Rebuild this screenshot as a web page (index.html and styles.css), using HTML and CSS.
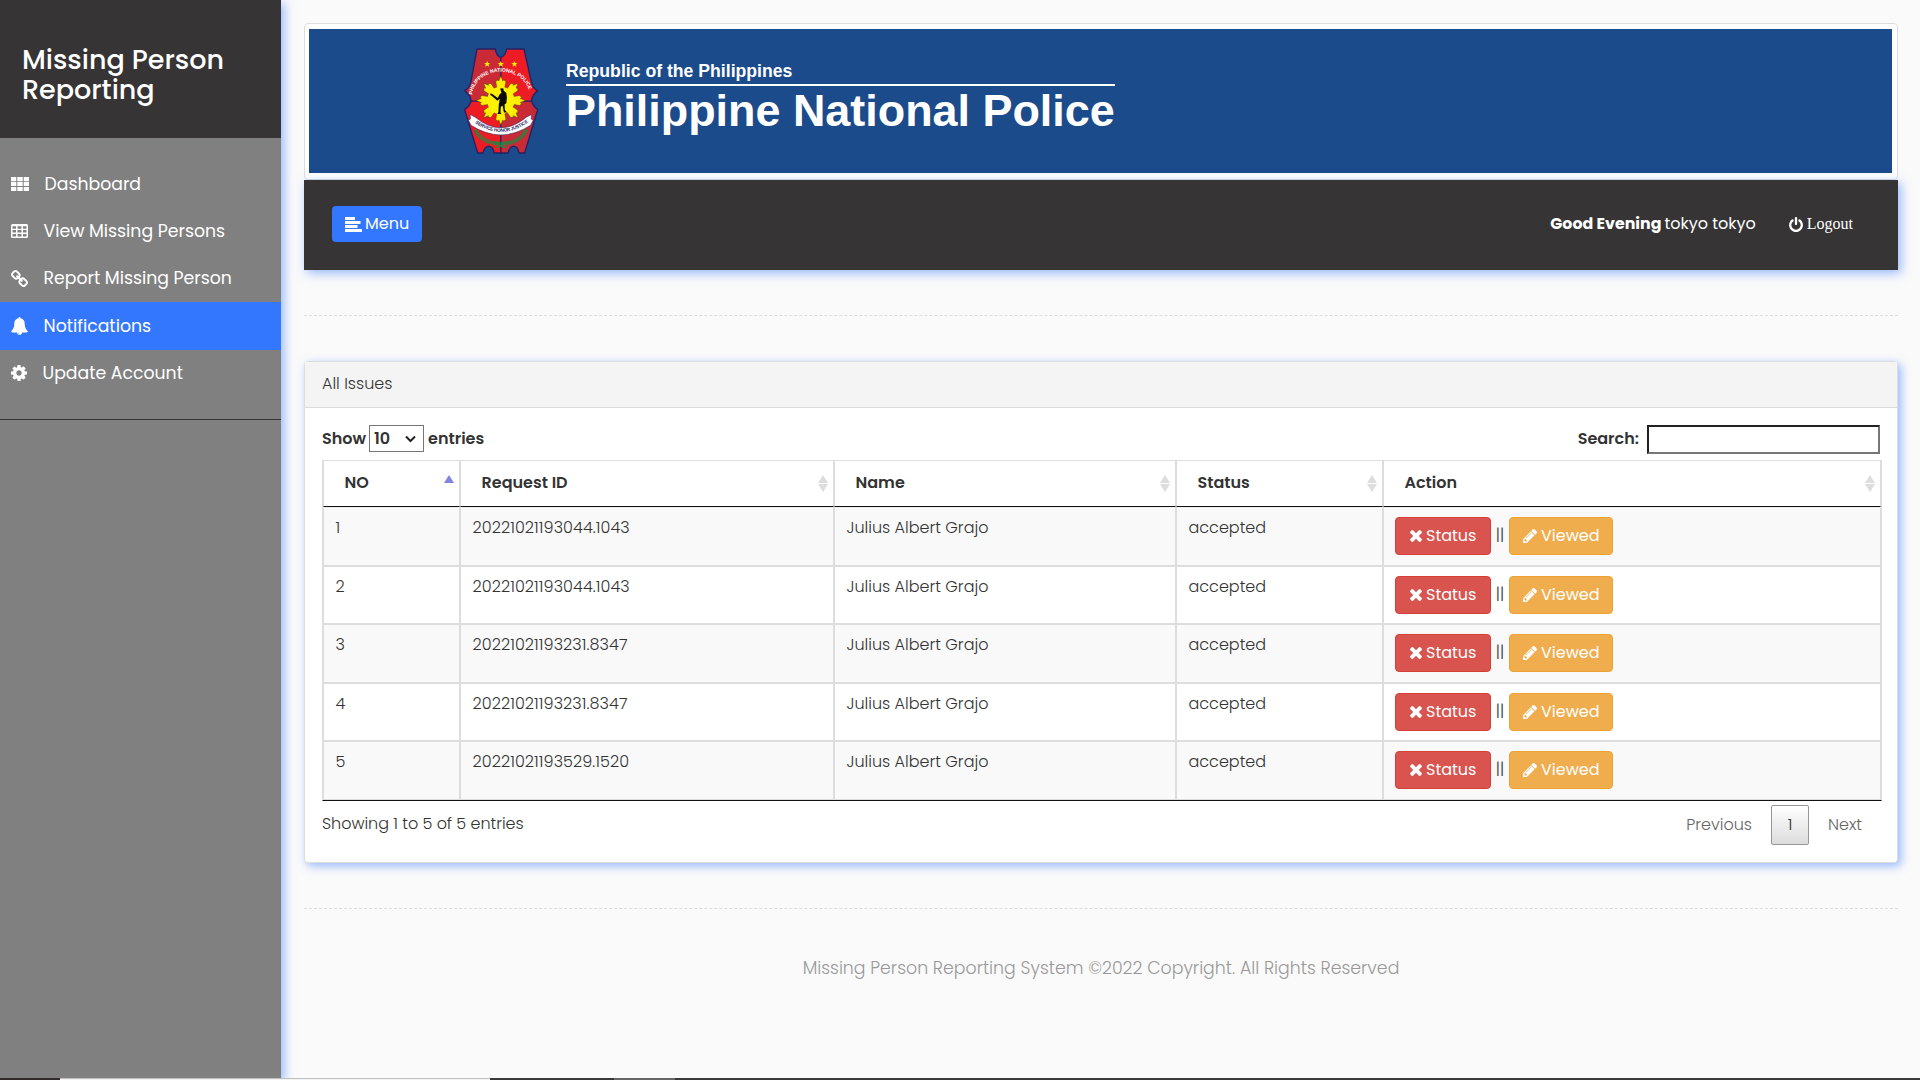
FILE: index.html
```html
<!DOCTYPE html>
<html lang="en">
<head>
<meta charset="utf-8">
<title>Missing Person Reporting</title>
<link rel="stylesheet" href="styles.css">
</head>
<body>
<svg class="sprite" width="0" height="0" aria-hidden="true">
  <symbol id="bell" viewBox="64 0 1664 1792"><path d="M912 1696q0-16-16-16-59 0-101.5-42.5t-42.5-101.5q0-16-16-16t-16 16q0 73 51.5 124.5t124.5 51.5q16 0 16-16zm816-288q0 52-38 90t-90 38h-448q0 106-75 181t-181 75-181-75-75-181h-448q-52 0-90-38t-38-90q50-42 91-88t85-119.5 74.5-158.5 50-206 19.5-260q0-152 117-282.5t307-158.5q-8-19-8-39 0-40 28-68t68-28 68 28 28 68q0 20-8 39 190 28 307 158.5t117 282.5q0 139 19.5 260t50 206 74.5 158.5 85 119.5 91 88z"/></symbol>
  <symbol id="cog" viewBox="128 128 1536 1536"><path d="M1152 896q0-106-75-181t-181-75-181 75-75 181 75 181 181 75 181-75 75-181zm512-109v222q0 12-8 23t-20 13l-185 28q-19 54-39 91 35 50 107 138 10 12 10 25t-9 23q-27 37-99 108t-94 71q-12 0-26-9l-138-108q-44 23-91 38-16 136-29 186-7 28-36 28h-222q-14 0-24.5-8.5t-11.5-21.5l-28-184q-49-16-90-37l-141 107q-10 9-25 9-14 0-25-11-126-114-165-168-7-10-7-23 0-12 8-23 15-21 51-66.5t54-70.5q-27-50-41-99l-183-27q-13-2-21-12.5t-8-23.5v-222q0-12 8-23t19-13l186-28q14-46 39-92-40-57-107-138-10-12-10-24 0-10 9-23 26-36 98.5-107.5t94.5-71.5q13 0 26 10l138 107q44-23 91-38 16-136 29-186 7-28 36-28h222q14 0 24.5 8.5t11.5 21.5l28 184q49 16 90 37l142-107q9-9 24-9 13 0 25 10 129 119 165 170 7 8 7 22 0 12-8 23-15 21-51 66.5t-54 70.5q26 50 41 98l183 28q13 2 21 12.5t8 23.5z"/></symbol>
  <symbol id="power" viewBox="128 0 1536 1664"><path d="M1664 896q0 156-61 298t-164 245-245 164-298 61-298-61-245-164-164-245-61-298q0-182 80.5-343t226.5-270q43-32 95.5-25t83.5 50q32 42 24.5 94.5t-49.5 84.5q-98 74-151.5 181t-53.5 228q0 104 40.5 198.5t109.5 163.5 163.5 109.5 198.5 40.5 198.5-40.5 163.5-109.5 109.5-163.5 40.5-198.5q0-121-53.5-228t-151.5-181q-42-32-49.5-84.5t24.5-94.5q31-43 84-50t95 25q146 109 226.5 270t80.5 343zm-640-768v640q0 52-38 90t-90 38-90-38-38-90v-640q0-52 38-90t90-38 90 38 38 90z"/></symbol>
  <symbol id="times" viewBox="302 366 1188 1188"><path d="M1490 1322q0 40-28 68l-136 136q-28 28-68 28t-68-28l-294-294-294 294q-28 28-68 28t-68-28l-136-136q-28-28-28-68t28-68l294-294-294-294q-28-28-28-68t28-68l136-136q28-28 68-28t68 28l294 294 294-294q28-28 68-28t68 28l136 136q28 28 28 68t-28 68l-294 294 294 294q28 28 28 68z"/></symbol>
  <symbol id="pencil" viewBox="128 149 1515 1515"><path d="M491 1536l91-91-235-235-91 91v107h128v128h107zm523-928q0-22-22-22-10 0-17 7l-542 542q-7 7-7 17 0 22 22 22 10 0 17-7l542-542q7-7 7-17zm-54-192l416 416-832 832h-416v-416zm683 96q0 53-37 90l-166 166-416-416 166-165q36-38 90-38 53 0 91 38l235 234q37 39 37 91z"/></symbol>
  <symbol id="chain" viewBox="80 16 1632 1632"><path d="M1520 1216q0-40-28-68l-208-208q-28-28-68-28-42 0-72 32 3 3 19 18.5t21.5 21.5 15 19 13 25.5 3.5 27.5q0 40-28 68t-68 28q-15 0-27.5-3.5t-25.5-13-19-15-21.5-21.5-18.5-19q-33 31-33 73 0 40 28 68l206 207q27 27 68 27 40 0 68-26l147-146q28-28 28-67zm-703-705q0-40-28-68l-206-207q-28-28-68-28-39 0-68 27l-147 146q-28 28-28 67 0 40 28 68l208 208q27 27 68 27 42 0 72-31-3-3-19-18.5t-21.5-21.5-15-19-13-25.5-3.5-27.5q0-40 28-68t68-28q15 0 27.5 3.5t25.5 13 19 15 21.5 21.5 18.5 19q33-31 33-73zm895 705q0 120-85 203l-147 146q-83 83-203 83-121 0-204-85l-206-207q-83-83-83-203 0-123 88-209l-88-88q-86 88-208 88-120 0-204-84l-208-208q-84-84-84-204t85-203l147-146q83-83 203-83 121 0 204 85l206 207q83 83 83 203 0 123-88 209l88 88q86-88 208-88 120 0 204 84l208 208q84 84 84 204z"/></symbol>
  <symbol id="th" viewBox="0 0 18 14"><path d="M0 0h5.300v4.200H0zM6.300 0h5.400v4.200H6.300zM12.700 0H18v4.200h-5.300zM0 5h5.300v4.100H0zM6.300 5h5.400v4.100H6.300zM12.700 5H18v4.100h-5.300zM0 9.900h5.300V14H0zM6.300 9.900h5.400V14H6.300zM12.700 9.900H18V14h-5.300z"/></symbol>
  <symbol id="grid" viewBox="0 0 17 14"><path fill-rule="evenodd" d="M1.500 0h14A1.500 1.500 0 0 1 17 1.500v11a1.500 1.500 0 0 1-1.500 1.500h-14A1.500 1.500 0 0 1 0 12.500v-11A1.500 1.500 0 0 1 1.500 0zM1.500 2.200v2.500h3.500V2.200zM6.500 2.200v2.500h4V2.200zM12 2.200v2.500h3.500V2.200zM1.500 6v2.600h3.500V6zM6.500 6v2.600h4V6zM12 6v2.600h3.500V6zM1.500 10v2.500h3.500V10zM6.500 10v2.500h4V10zM12 10v2.500h3.500V10z"/></symbol>
  <symbol id="align" viewBox="0 0 17 15"><path d="M0 0h10v3H0zM0 4h15.500v3H0zM0 8h12.500v3H0zM0 12h17v3H0z"/></symbol>
  <symbol id="sort" viewBox="0 0 10 17"><path d="M5 0l5 8H0zM5 17l5-8H0z"/></symbol>
  <symbol id="sort-asc" viewBox="0 0 10 17"><path d="M5 0l5 8H0z"/></symbol>
</svg>
<div class="app">
  <nav class="sidebar">
    <h3 class="brand">Missing Person<br>Reporting</h3>
    <ul class="menu">
      <li><svg width="18" height="14"><use href="#th"/></svg><span>Dashboard</span></li>
      <li><svg width="17" height="14"><use href="#grid"/></svg><span>View Missing Persons</span></li>
      <li><svg width="17" height="17"><use href="#chain"/></svg><span>Report Missing Person</span></li>
      <li class="active"><svg width="17" height="18"><use href="#bell"/></svg><span>Notifications</span></li>
      <li class="account"><svg width="16" height="16"><use href="#cog"/></svg><span>Update Account</span></li>
    </ul>
  </nav>
  <main class="content">
    <header class="banner">
      <div class="banner-inner">
        <svg class="emblem" width="75" height="106" viewBox="75 57 220 311">
          <defs>
            <clipPath id="shield"><path d="M113 60h54q2 20 16 25 14-5 17-25h51l22 98q2 16 18 24-15 12-18 29 3 16 18 27L253 365h-17q-2-18-15-20-14 2-16 20h-42q-2-18-15-20-14 2-17 20h-16L77 238q15-10 19-27-3-17-19-29 14-8 18-24z"/></clipPath>
            <path id="arc-top" d="M99 194C112 104 255 104 269 194"/>
            <path id="arc-low" d="M103 274Q183 332 265 274"/>
          </defs>
          <g clip-path="url(#shield)">
            <path fill="#c92a35" d="M75 57h108v155H75zM183 212h112v156H183z"/>
            <path fill="#ed1c24" d="M183 57h112v155H183zM75 212h108v156H75z"/>
            <path stroke="#262262" stroke-width="4" d="M183 57v311M75 213h220"/>
          </g>
          <path fill="none" stroke="#262262" stroke-width="4" stroke-linejoin="round" d="M113 60h54q2 20 16 25 14-5 17-25h51l22 98q2 16 18 24-15 12-18 29 3 16 18 27L253 365h-17q-2-18-15-20-14 2-16 20h-42q-2-18-15-20-14 2-17 20h-16L77 238q15-10 19-27-3-17-19-29 14-8 18-24z"/>
          <g fill="#ffed00"><path id="star" d="M143 95l2.500 6 6.500.5-5 4 2 6.500-6-3.500-6 3.500 2-6.500-5-4 6.500-.5z"/><use href="#star" x="40"/><use href="#star" x="80"/></g>
          <g fill="#ffed00" stroke="#51420b" stroke-width="1.500">
            <g id="rays"><path d="M173 182l-5-27 7-5 2 4 6-15 6 15 2-4 7 5-5 27zM193 240l5 27-7 5-2-4-6 15-6-15-2 4-7-5 5-27z"/></g>
            <use href="#rays" transform="rotate(45 183 211)"/><use href="#rays" transform="rotate(90 183 211)"/><use href="#rays" transform="rotate(135 183 211)"/>
          </g>
          <circle cx="183" cy="211" r="40" fill="#fff200"/>
          <path fill="#0b0b08" d="M181 176l9-1 2 8 7 5 2 14-2 17-5 4 1 15 6 8h-9l-4-20-5 4-1 16 3 5h-12l3-7 1-21 3-17-7 6-17-15-4-2 1-5 6 3 15 11 6-12 5-3z"/>
          <g fill="none" stroke="#188b45"><path stroke-width="11" stroke-dasharray="5 2" d="M108 297q20 40 75 41 55-1 75-41"/><path stroke-width="3" d="M168 350q15-3 30-20M198 350q-15-3-30-20"/></g>
          <path fill="#fff" stroke="#262262" stroke-width="1.500" d="M93 252l15 8q75 62 150 0l15-8-1 13 6 4-8 15q-87 56-174 0l-8-15 6-4z"/>
          <text class="motto"><textPath href="#arc-low" startOffset="3%" textLength="168">SERVICE HONOR JUSTICE</textPath></text>
          <text class="arc-name"><textPath href="#arc-top" textLength="222">PHILIPPINE NATIONAL POLICE</textPath></text>
        </svg>
        <div class="agency"><div class="republic">Republic of the Philippines</div><div class="pnp">Philippine National Police</div></div>
      </div>
    </header>
    <div class="topbar">
      <button class="menu-btn"><svg width="17" height="15"><use href="#align"/></svg><span>Menu</span></button>
      <div class="user"><b>Good Evening</b><span class="who">tokyo tokyo</span><svg width="14" height="15"><use href="#power"/></svg><span class="logout">Logout</span></div>
    </div>
    <div class="rule"></div>
    <section class="card">
      <div class="card-head">All Issues</div>
      <div class="card-body">
        <div class="controls">
          <div class="length"><span>Show</span><div class="select"><span>10</span><svg width="11" height="8" viewBox="0 0 11 8"><path d="M1 1.500l4.500 4.500L10 1.500" fill="none" stroke="#222" stroke-width="2"/></svg></div><span>entries</span></div>
          <label class="search"><span>Search:</span><input type="text"></label>
        </div>
        <table>
          <colgroup><col class="c1"><col class="c2"><col class="c3"><col class="c4"><col class="c5"></colgroup>
          <thead><tr>
            <th><div><span>NO</span><svg class="asc" width="10" height="17"><use href="#sort-asc"/></svg></div></th>
            <th><div><span>Request ID</span><svg width="10" height="17"><use href="#sort"/></svg></div></th>
            <th><div><span>Name</span><svg width="10" height="17"><use href="#sort"/></svg></div></th>
            <th><div><span>Status</span><svg width="10" height="17"><use href="#sort"/></svg></div></th>
            <th><div><span>Action</span><svg width="10" height="17"><use href="#sort"/></svg></div></th>
          </tr></thead>
          <tbody>
            <tr><td>1</td><td class="id">20221021193044.1043</td><td>Julius Albert Grajo</td><td>accepted</td><td><div class="actions"><button class="btn red"><svg width="12" height="12"><use href="#times"/></svg><span>Status</span></button><span class="sep">||</span><button class="btn amber"><svg width="14" height="14"><use href="#pencil"/></svg><span>Viewed</span></button></div></td></tr>
            <tr><td>2</td><td class="id">20221021193044.1043</td><td>Julius Albert Grajo</td><td>accepted</td><td><div class="actions"><button class="btn red"><svg width="12" height="12"><use href="#times"/></svg><span>Status</span></button><span class="sep">||</span><button class="btn amber"><svg width="14" height="14"><use href="#pencil"/></svg><span>Viewed</span></button></div></td></tr>
            <tr><td>3</td><td class="id">20221021193231.8347</td><td>Julius Albert Grajo</td><td>accepted</td><td><div class="actions"><button class="btn red"><svg width="12" height="12"><use href="#times"/></svg><span>Status</span></button><span class="sep">||</span><button class="btn amber"><svg width="14" height="14"><use href="#pencil"/></svg><span>Viewed</span></button></div></td></tr>
            <tr><td>4</td><td class="id">20221021193231.8347</td><td>Julius Albert Grajo</td><td>accepted</td><td><div class="actions"><button class="btn red"><svg width="12" height="12"><use href="#times"/></svg><span>Status</span></button><span class="sep">||</span><button class="btn amber"><svg width="14" height="14"><use href="#pencil"/></svg><span>Viewed</span></button></div></td></tr>
            <tr><td>5</td><td class="id">20221021193529.1520</td><td>Julius Albert Grajo</td><td>accepted</td><td><div class="actions"><button class="btn red"><svg width="12" height="12"><use href="#times"/></svg><span>Status</span></button><span class="sep">||</span><button class="btn amber"><svg width="14" height="14"><use href="#pencil"/></svg><span>Viewed</span></button></div></td></tr>
          </tbody>
        </table>
        <div class="foot"><span class="info">Showing 1 to 5 of 5 entries</span><div class="pager"><span>Previous</span><span class="current">1</span><span>Next</span></div></div>
      </div>
    </section>
    <div class="rule"></div>
    <footer>Missing Person Reporting System ©2022 Copyright. All Rights Reserved</footer>
  </main>
</div>
<div class="taskbar"><div class="seg-start"></div><div class="seg-search"></div><div class="seg-gap"></div><div class="seg-app"></div><div class="seg-rest"></div></div>
</body>
</html>
```
FILE: styles.css
```css
*{box-sizing:border-box}
body{margin:0;background:#fafafa;color:#333;font:300 16px/20px Poppins,Inter,"Open Sans",sans-serif;overflow:hidden}
svg{display:block;flex:none;fill:currentColor}
.sprite{position:absolute}
.app{display:flex;height:1080px}
.sidebar{width:281px;flex:none;background:#808080;color:#fff;box-shadow:3px 3px 10px rgba(51,119,255,.5)}
.brand{margin:0;height:138px;padding:45px 0 0 22px;background:#363434;font-size:27px;line-height:30px;font-weight:500}
.menu{list-style:none;margin:0;padding:22px 0 23px;border-bottom:1px solid #363434;font-size:17.300px;font-weight:400}
.menu li{display:flex;align-items:center;gap:15.500px;height:47.400px;padding-left:11px}
.menu .active{height:48px;background:#37f}
.menu .account{height:46px}
.content{flex:1;padding:23px 22px 0 23px}
.banner{height:157px;padding:5px 5px 5px 4px;border:1px solid #ddd;border-radius:4px;background:#fff}
.banner-inner{display:flex;height:144px;padding:19px 0 0 155px;background:#1b4b8b;font-family:"Liberation Sans",Arial,sans-serif;font-weight:700;color:#fff}
.agency{margin-left:27px;padding-top:13px}
.republic{font-size:17.650px;height:25px;border-bottom:2px solid #fff}
.pnp{font-size:44.900px;line-height:50px}
.motto,.arc-name{font-family:"Liberation Sans",Arial,sans-serif}
.motto{font-size:14px;font-weight:700;fill:#262262}
.arc-name{font-size:15px;fill:#fff}
.topbar{display:flex;justify-content:space-between;align-items:center;height:90px;padding:0 45px 2px 28px;background:#363434;color:#fff;box-shadow:3px 3px 10px rgba(51,119,255,.5)}
.menu-btn{display:flex;align-items:center;gap:3px;width:90px;height:36px;padding:0 13px;border:0;border-radius:4px;background:#37f;color:#fff;font:400 16px/20px Poppins,Inter,sans-serif}
.user{display:flex;align-items:center;font-weight:400}
.user b{margin-right:3px;font-size:15.800px}
.who{margin-right:33px}
.logout{margin-left:4px;font:16px/20px "Liberation Serif",serif}
.rule{margin:45px 0;border-top:1px dashed #ddd}
.card{height:502px;border:1px solid #ddd;border-radius:4px;background:#fff;box-shadow:3px 3px 10px rgba(51,119,255,.5)}
.card-head{height:46px;padding:12px 17px;background:#f4f4f4;border-bottom:1px solid #ddd}
.card-body{padding:17px 15px 0 17px}
.controls{display:flex;justify-content:space-between;height:35px;font-weight:600}
.length,.search{display:flex;height:30px}
.length>span,.search span{line-height:28px}
.select{display:flex;align-items:center;justify-content:space-between;width:55px;height:27px;margin:0 4px 0 3px;padding:0 7px 0 4px;border:1px solid #767676}
.search input{width:233px;height:29px;margin:0 2px 0 8px;border:2px inset #767676;background:#fff}
table{width:1560px;table-layout:fixed;border-collapse:separate;border-spacing:0;border:1px solid #ddd;border-top:0;border-bottom:1px solid #111}
.c1{width:137px}
.c2{width:374px}
.c3{width:342px}
.c4{width:207px}
.c5{width:498px}
th{height:47px;padding:0 5px 2px 20.500px;border:1px solid #ddd;border-bottom-color:#111;text-align:left}
th div{display:flex;justify-content:space-between;align-items:center;font-weight:600}
th svg{color:#ddd;margin-top:2px}
th .asc{color:#7f85e0}
td{height:59px;padding:10px 11px 8px 11.500px;border:1px solid #ddd;vertical-align:top}
tbody tr:nth-child(odd){background:#f9f9f9}
tbody tr:nth-child(even) td{height:58px}
tbody tr:first-child td{border-top-color:#eee}
.id{letter-spacing:.08px}
.actions{display:flex;margin:-1px 0 0 -.5px}
.btn{display:flex;align-items:center;height:38px;border:1px solid;border-radius:4px;color:#fff;font:400 16px/20px Poppins,Inter,sans-serif}
.red{width:96px;gap:4px;padding:0 0 0 14px;background:#d9534f;border-color:#d43f3a}
.amber{width:104px;gap:4px;padding:0 0 0 13px;background:#f0ad4e;border-color:#eea236}
.sep{width:18px;line-height:36px;text-align:center}
.foot{display:flex;justify-content:space-between}
.info{padding-top:13px;letter-spacing:-.04px}
.pager{display:flex;padding:4px 20px 0 0;line-height:40px;color:#666}
.current{width:38px;height:40px;margin:0 19px;border:1px solid #979797;border-radius:2px;background:linear-gradient(#fff,#dcdcdc);line-height:38px;text-align:center;color:#333}
footer{margin-top:49px;text-align:center;font-size:17.350px;color:#999}
.taskbar{position:absolute;left:0;bottom:0;display:flex;width:100%;height:2px}
.seg-start{width:60px;background:#2e2a2a}
.seg-search{width:430px;background:#f2f2f2;border-top:1px solid #c0c0c0}
.seg-gap{width:124px;background:#3a3a3a}
.seg-app{width:61px;background:#666}
.seg-rest{flex:1;background:#3a3a3a}
```
